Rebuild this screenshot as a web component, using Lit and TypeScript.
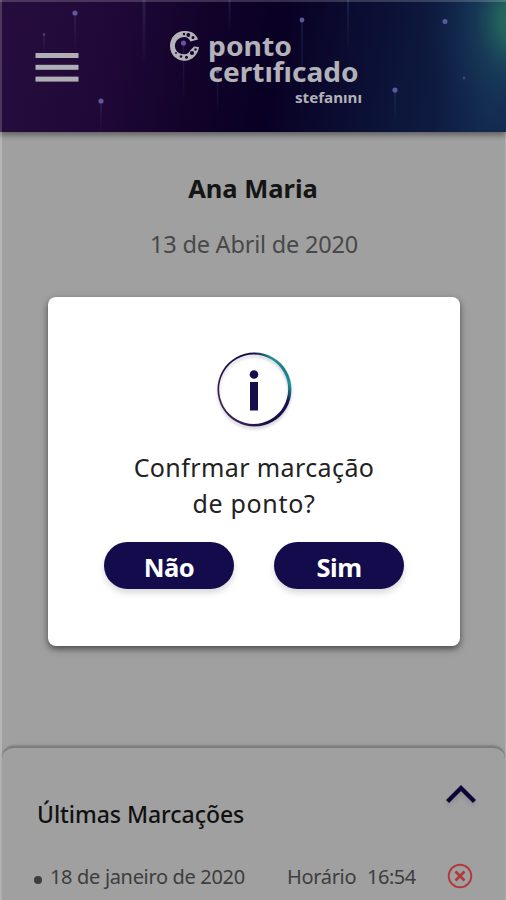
import { LitElement, html, css, svg } from "lit";
import { customElement } from "lit/decorators.js";

const sparks = [
  { x: 75, y: 13, r: 2.6, to: 52 },
  { x: 44, y: 34.5, r: 1.4, to: 52 },
  { x: 101, y: 101, r: 2.6, to: 132 },
  { x: 183.5, y: 43, r: 2.6, to: 98 },
  { x: 217.5, y: 71, r: 2, to: 114 },
  { x: 302, y: 20, r: 2.4, to: 112 },
  { x: 395, y: 90, r: 2.6, to: 122 },
  { x: 445, y: 21.5, r: 2.5, to: 22 },
  { x: 464, y: 78, r: 1.4, to: 79 },
];
const streaks = [
  { x: 144, to: 62, w: 3 },
  { x: 229.5, to: 30, w: 2 },
  { x: 348, to: 48, w: 2 },
];

@customElement("app-header")
export class AppHeader extends LitElement {
  static styles = css`
    :host {
      display: block;
      height: 132px;
      box-shadow: 0 3px 6px rgba(0, 0, 0, 0.42);
      position: relative;
      z-index: 1;
    }
    svg {
      display: block;
    }
    .brand {
      font-family: "Noto Sans", "Open Sans", sans-serif;
      font-weight: 700;
      fill: #b3b2b8;
    }
  `;

  render() {
    return html`<svg width="506" height="132" viewBox="0 0 506 132">
      <defs>
        <linearGradient id="sky" x1="0" y1="0" x2="1" y2="0.05">
          <stop offset="0" stop-color="#260d3d" />
          <stop offset="0.25" stop-color="#1f0837" />
          <stop offset="0.43" stop-color="#110229" />
          <stop offset="0.56" stop-color="#090024" />
          <stop offset="0.75" stop-color="#0b1034" />
          <stop offset="0.9" stop-color="#0e1b41" />
          <stop offset="1" stop-color="#13294e" />
        </linearGradient>
        <radialGradient id="glow" gradientUnits="userSpaceOnUse" cx="0" cy="0" r="1"
          gradientTransform="translate(512 20) scale(90 135)">
          <stop offset="0" stop-color="#257060" />
          <stop offset="0.15" stop-color="#24665f" stop-opacity="0.9" />
          <stop offset="0.4" stop-color="#1c4a60" stop-opacity="0.55" />
          <stop offset="0.65" stop-color="#173a5a" stop-opacity="0.35" />
          <stop offset="1" stop-color="#132f54" stop-opacity="0" />
        </radialGradient>
        <linearGradient id="trail" x1="0" y1="0" x2="0" y2="1">
          <stop offset="0" stop-color="#5e68a8" stop-opacity="0.4" />
          <stop offset="1" stop-color="#5e68a8" stop-opacity="0.03" />
        </linearGradient>
      </defs>
      <rect width="506" height="132" fill="url(#sky)" />
      <rect width="506" height="132" fill="url(#glow)" />
      ${streaks.map(
        (s) => svg`<rect x=${s.x - s.w / 2} y="0" width=${s.w} height=${s.to} fill="url(#trail)" opacity="0.55" />`,
      )}
      ${sparks.map(
        (s) => svg`<rect x=${s.x - 0.7} y=${s.y} width="1.5" height=${s.to - s.y} fill="url(#trail)" opacity="0.6" />
          <circle cx=${s.x} cy=${s.y} r=${s.r} fill="#6461a6" opacity=${s.r < 2 ? 0.5 : 0.9} />`,
      )}
      <g fill="#b0afb7">
        <rect x="35.5" y="53" width="43" height="5" />
        <rect x="35.5" y="64.8" width="43" height="5" />
        <rect x="35.5" y="76.6" width="43" height="5" />
      </g>
      <path fill="#b3b2b8" fill-rule="evenodd"
        d="M186 31 C177 30 170 37 170 46 C170 55 177 61 185 60.7 C192 60.5 198 55 199 47 L194 46.5 L190.5 50 C189 53 187 54.5 184 54.3 C178 54 174.500 50 175 45 C175.500 40 180 36.8 185 37 C188 37.5 189 39 190.5 41.5 L198 39.5 C196 34 192 31.3 186 31 Z" />
      <g fill="#120329">
        <circle cx="184" cy="34" r="1.2" />
        <circle cx="188.3" cy="35" r="1.9" />
        <circle cx="193" cy="37.5" r="1.5" />
        <circle cx="195.5" cy="49.5" r="1.2" />
        <circle cx="192" cy="53" r="2.1" />
        <circle cx="186.5" cy="57.3" r="1.5" />
        <circle cx="181" cy="56.5" r="1.3" />
        <circle cx="176" cy="53" r="0.9" />
      </g>
      <text class="brand" font-size="27.5" x="208" y="56" textLength="84" lengthAdjust="spacingAndGlyphs">ponto</text>
      <text class="brand" font-size="27.5" x="208.5" y="82" textLength="150" lengthAdjust="spacingAndGlyphs">certıfıcado</text>
      <text class="brand" font-size="14.5" x="295" y="102.5" textLength="67" lengthAdjust="spacingAndGlyphs">stefanını</text>
      <rect width="506" height="2" fill="#fff" opacity="0.18" />
      <rect width="2" height="132" fill="#fff" opacity="0.18" />
    </svg>`;
  }
}

@customElement("confirm-dialog")
export class ConfirmDialog extends LitElement {
  static styles = css`
    :host {
      box-sizing: border-box;
      display: flex;
      flex-direction: column;
      align-items: center;
      width: 412px;
      height: 348.5px;
      padding-top: 51px;
      background: #fff;
      border-radius: 8px;
      box-shadow: 0 3px 7px rgba(0, 0, 0, 0.55);
      color: #222;
    }
    svg {
      display: block;
      overflow: visible;
      margin-right: 1px;
    }
    .message {
      margin: 25px 0 0;
      font-size: 25px;
      font-weight: 450;
      line-height: 36px;
      text-align: center;
      white-space: nowrap;
    }
    .line {
      display: block;
      letter-spacing: 0.7px;
    }
    .first {
      letter-spacing: 0.4px;
    }
    .actions {
      display: flex;
      gap: 40px;
      margin-top: 20.5px;
    }
    button {
      width: 130px;
      height: 47px;
      padding: 4px 0 0;
      border: 0;
      border-radius: 24px;
      background: #130b4b;
      color: #fff;
      font: 700 25.5px/43px "Noto Sans", "Open Sans", sans-serif;
      letter-spacing: -0.5px;
      box-shadow: 0 4px 6px rgba(0, 0, 0, 0.15);
    }
  `;

  render() {
    return html`
      <svg width="76" height="76" viewBox="0 0 76 76">
        <defs>
          <linearGradient id="ring" x1="0.1" y1="0.7" x2="0.9" y2="0.15">
            <stop offset="0" stop-color="#3d2052" />
            <stop offset="0.35" stop-color="#161049" />
            <stop offset="0.74" stop-color="#150d4c" />
            <stop offset="0.9" stop-color="#239096" />
            <stop offset="1" stop-color="#1b6b85" />
          </linearGradient>
          <filter id="soft" x="-20%" y="-20%" width="140%" height="150%">
            <feDropShadow dx="0" dy="2.5" stdDeviation="1.8" flood-opacity="0.2" />
          </filter>
        </defs>
        <path filter="url(#soft)" fill="url(#ring)" fill-rule="evenodd"
          d="M38.5 4.5 A37 37 0 1 1 38.4 4.5 Z M37.6 6.6 A34.5 34.7 0 1 0 37.7 6.6 Z" />
        <circle cx="38" cy="26.5" r="4.3" fill="#170f4d" />
        <rect x="34" y="34" width="8" height="28.5" fill="#170f4d" />
      </svg>
      <p class="message">
        <span class="line first">Confrmar marcação</span>
        <span class="line">de ponto?</span>
      </p>
      <div class="actions"><button>Não</button><button>Sim</button></div>
    `;
  }
}

@customElement("recent-marks")
export class RecentMarks extends LitElement {
  static styles = css`
    :host {
      box-sizing: border-box;
      display: block;
      height: 154px;
      margin: 0 1px 0 2px;
      padding: 0 27px 0 35px;
      border-top: 2px solid #7d7d7d;
      border-radius: 12px 12px 0 0;
      background: #a0a0a0;
      box-shadow: 0 -1px 2px rgba(0, 0, 0, 0.18);
    }
    .head {
      display: flex;
      justify-content: space-between;
      height: 98px;
    }
    h2 {
      margin: 50px 0 0;
      font-size: 23px;
      font-weight: 500;
      line-height: 32px;
      letter-spacing: -0.05px;
      color: #101010;
    }
    .head svg {
      margin: 33px 2px 0 0;
      filter: drop-shadow(0 3px 2px rgba(0, 0, 0, 0.12));
    }
    .row {
      display: flex;
      align-items: center;
      height: 60px;
      font-size: 20px;
      font-weight: 450;
      letter-spacing: -0.33px;
      color: #3d3d3d;
      white-space: pre;
    }
    .bullet {
      width: 8px;
      height: 8px;
      margin: 8px 8px 0 -3px;
      border-radius: 50%;
      background: #3d3d3d;
    }
    .day {
      width: 237px;
    }
    .label {
      width: 80px;
    }
    .time {
      letter-spacing: -0.5px;
    }
    .row svg {
      margin-left: auto;
    }
  `;

  render() {
    return html`
      <div class="head">
        <h2>Últimas Marcações</h2>
        <svg width="30" height="24" viewBox="0 0 30 24">
          <path d="M1.5 20.5 L15 7 L28.5 20.5" fill="none" stroke="#0c0538" stroke-width="4.4" />
        </svg>
      </div>
      <div class="row">
        <span class="bullet"></span>
        <span class="day">18 de janeiro de 2020</span>
        <span class="label">Horário</span>
        <span class="time">16:54</span>
        <svg width="31.5" height="26" viewBox="0 0 31.5 26">
          <circle cx="13" cy="13" r="11.3" fill="none" stroke="#b03b3c" stroke-width="1.9" />
          <path d="M8.5 8.5 L17.5 17.5 M17.5 8.5 L8.5 17.5" stroke="#b03b3c" stroke-width="2.7" />
        </svg>
      </div>
    `;
  }
}

@customElement("app-root")
export class AppRoot extends LitElement {
  static styles = css`
    :host {
      display: flex;
      flex-direction: column;
      position: relative;
      width: 506px;
      height: 900px;
      overflow: hidden;
      background: #a0a0a0;
      font-family: "Noto Sans", "Open Sans", sans-serif;
      box-shadow: inset 2px 0 #b5b5b5, inset -1px 0 #b0b0b0;
    }
    main {
      flex: 1;
      text-align: center;
    }
    h1 {
      margin: 38px 0 0;
      font-size: 25.5px;
      line-height: 36px;
      font-weight: 700;
      color: #151515;
    }
    .date {
      margin: 20px 0 0;
      padding-left: 2px;
      font-size: 23.5px;
      line-height: 36px;
      letter-spacing: -0.2px;
      color: #484848;
    }
    .modal {
      position: absolute;
      inset: 297px 0 auto 48px;
    }
  `;

  render() {
    return html`
      <app-header></app-header>
      <main>
        <h1>Ana Maria</h1>
        <p class="date">13 de Abril de 2020</p>
      </main>
      <recent-marks></recent-marks>
      <div class="modal"><confirm-dialog></confirm-dialog></div>
    `;
  }
}
